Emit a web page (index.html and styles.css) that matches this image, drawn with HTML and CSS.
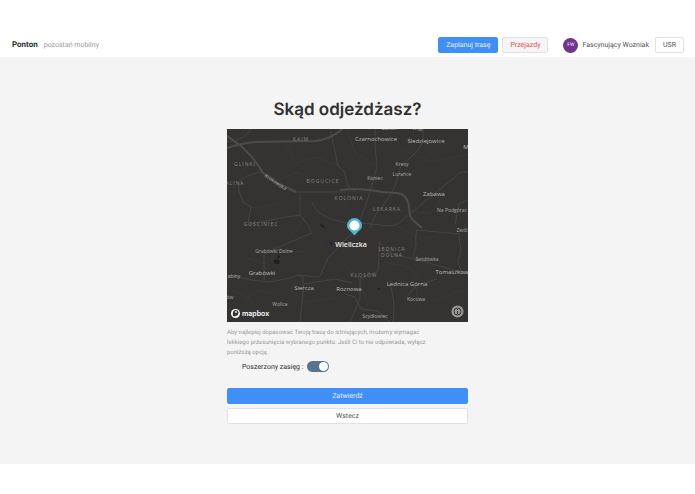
FILE: index.html
```html
<!DOCTYPE html>
<html lang="pl">
<head>
<meta charset="utf-8">
<meta name="viewport" content="width=device-width, initial-scale=1">
<title>Ponton</title>
<link rel="stylesheet" href="styles.css">
</head>
<body>
<header class="topbar">
  <div class="brand"><strong class="brand-name">Ponton</strong><span class="brand-tagline">pozostań mobilny</span></div>
  <nav class="actions">
    <button type="button" class="btn btn-primary">Zaplanuj trasę</button>
    <button type="button" class="btn btn-danger">Przejazdy</button>
    <div class="user"><span class="avatar">FW</span><span>Fascynujący Wozniak</span></div>
    <button type="button" class="btn">USR</button>
  </nav>
</header>
<main class="page">
  <div class="panel">
    <h1 class="title">Skąd odjeżdżasz?</h1>
    <svg class="map" viewBox="227 129 241 193" role="img" aria-label="Mapa: Wieliczka">
      <rect class="land" x="227" y="129" width="241" height="193"/>
      <g class="minor faint">
        <path d="M258 168l19 12 22-8 16 10M285 143l12 20 18-6 25 9M240 200l14 8 24-4M310 200l18 12M375 165l-20-12-8-24M402 150l30 12 36-8M408 210l22 4 12-16M395 225l28 14 20-5M248 258l18 6 12-14 26 2M290 290l16 12 28-4M340 262l18 14 10 30M398 280l18 8 24-6M420 310l-4-22M330 232l-12 14M436 300l32-12M233 290l20 12M372 238l16 12M305 215l-8 16M245 300l14-10 16 5M385 262l25 5 12 20M350 185l-5 20 12 10"/>
      </g>
      <g class="minor">
        <path d="M227 142q18-2 24-13M263 171l-16 5q-10 4-8 15l4 11 8 5-3 16"/>
        <path d="M300 193v22l-14 2-20 4-20 4M300 215l8 10 4 8-24 10-14 6-10 5v27M227 275q14 2 24 5l18 2 22-4 6-3 6 2v16l-3 29M297 275l22 2q4-5 5-10l4-9q10-9 17-18l8-7M303 284l32-5 17 4"/>
        <path d="M330 129l4 18 4 19 6 5 4 15 7 6M312 203l6 9 12 7 17 4M375 129v17l2 20-2 8-5 18-10 29M423 129v13q-5 10-12 15l-10 9-6 20-5 10-14 18-6 14"/>
        <path d="M360 223l30 3q9-1 16-9l55-45h7M416 230l44 4M380 241l-2 30q-10 5-18 7v20l-10 24M378 247l18 8 18 4 54 15M459 236l2 15-3 10 3 11M345 294l10 3 6 12 16 2 13 11M390 283q6 22 3 39M413 257l3-12q-1-10 1-15M468 200l-9 4-4 20M408 295l9-10 20-6"/>
      </g>
      <g class="major">
        <path d="M227 148q15-5 28-6l60-1q17-2 27-12M227 136l14 10q12 10 22 27l12 9 21 10M340 190l15-1 15 1q14 3 27 3 11 1 12 15 0 9 5 13l8 7"/>
      </g>
      <path class="minor" d="M296 192h50"/>
      <g class="water"><path d="M273 261l3-2 4 2-1 3h-4zM277 257l2-2 1 2-2 2zM320 224l3 1 2 3-3-1zM329 244l3-2v2l-2 1z"/><circle cx="379" cy="289" r="1"/></g>
      <defs><path id="road-label" d="M259 173l12 8 10 7 10 5"/></defs>
      <g class="district">
        <text x="301" y="141">KAIM</text><text x="245" y="166">GLINKI</text><text x="235" y="185">ALINA</text>
        <text x="323" y="183">BOGUCICE</text><text x="349" y="200">KOLONIA</text><text x="387" y="211">LEKARKA</text>
        <text x="261" y="226">GOŚCINIEC</text><text x="392" y="251">LEDNICA</text><text x="392" y="257">DOLNA</text><text x="364" y="277">KŁOSÓW</text>
      </g>
      <g class="village">
        <text x="402" y="166">Kresy</text><text x="402" y="176">Lurańce</text><text x="375" y="180">Koniec</text>
        <text x="274" y="253">Grabówki Dolne</text><text x="280" y="306">Wolica</text><text x="427" y="261">Świdówka</text>
        <text x="416" y="301">Kocowa</text><text x="375" y="318">Szydłowiec</text><text x="234" y="278">abiny</text>
        <text x="230" y="299">ów</text><text x="452" y="212">Na Podgórac</text><text x="462" y="232">Zwól</text>
        <text x="389" y="130">Gdzian</text><text x="418" y="130">Węgr</text>
        <text><textPath href="#road-label" startOffset="50%">Krakowska</textPath></text>
      </g>
      <g class="town">
        <text x="376" y="141">Czarnochowice</text><text x="426" y="143">Śledziejowice</text><text x="466" y="149">M</text>
        <text x="434" y="196">Zabawa</text><text x="262" y="275">Grabówki</text><text x="304" y="290">Siercza</text>
        <text x="349" y="291">Roznowa</text><text x="407" y="286">Lednica Górna</text><text x="452" y="274">Tomaszkow</text>
      </g>
      <text class="city" x="351" y="247">Wieliczka</text>
      <path class="pin" d="M354.500 235.500l-4-4.200c-3-2-3.500-4-3.500-5.800a7.500 7.500 0 0 1 15 0c0 1.800-.5 3.800-3.500 5.800z"/>
      <circle class="pin-dot" cx="354.500" cy="225.500" r="5"/>
      <circle class="logo-disc" cx="235.500" cy="313.500" r="4.500"/>
      <path class="logo-mark" d="M233 316q-1-5 2-6 3-.4 3.500 2 .2 3-2.500 4-1.500.4-3 0z"/>
      <path class="logo-star" d="M236 310.500l.5 1 1 .5-1 .5-.5 1-.5-1-1-.5 1-.5z"/>
      <text class="logo-text" x="242" y="316">mapbox</text>
      <circle class="info-disc" cx="457.500" cy="311.500" r="6"/>
      <circle class="info-ring" cx="457.500" cy="311.500" r="3.500"/>
      <path class="info-mark" d="M457 309h1v1h-1zM457 311h1v3h-1z"/>
    </svg>
    <p class="hint">Aby najlepiej dopasować Twoją trasę do istniejących, możemy wymagać lekkiego przesunięcia wybranego punktu. Jeśli Ci to nie odpowiada, wyłącz poniższą opcję.</p>
    <div class="option">
      <label for="range">Poszerzony zasięg&nbsp;:</label>
      <input class="switch" type="checkbox" role="switch" id="range" checked>
    </div>
    <div class="buttons">
      <button type="button" class="btn btn-primary">Zatwierdź</button>
      <button type="button" class="btn">Wstecz</button>
    </div>
  </div>
</main>
</body>
</html>
```
FILE: styles.css
```css
* { box-sizing: border-box; }

body {
  margin: 0;
  padding: 32px 0 30px;
  background: #fff;
  color: #303030;
  font: 7px/10px Roboto, "Liberation Sans", sans-serif;
  text-rendering: geometricPrecision;
}

.topbar {
  display: flex;
  align-items: center;
  justify-content: space-between;
  padding: 5px 11px 4px 12px;
}

.brand { display: flex; align-items: baseline; gap: 6px; }
.brand-name { font-size: 8px; font-weight: 700; }
.brand-tagline { color: #999; }
.actions { display: flex; align-items: center; gap: 4px; color: #555; }

.btn {
  height: 16px;
  padding: 0 7px;
  border: 1px solid #e2e2e2;
  border-radius: 2px;
  background: #fff;
  color: #555;
  font: inherit;
  text-rendering: inherit;
}

.btn-primary { border-color: #408ff7; background: #408ff7; color: #e6f1ff; }
.btn-danger { background: #f5f5f5; color: #ef4b50; }
.user { display: flex; align-items: center; gap: 4px; margin: 0 2px 0 11px; }

.avatar {
  width: 15px;
  height: 15px;
  border-radius: 50%;
  background: #70368f;
  color: #eee;
  font-size: 5px;
  line-height: 15px;
  text-align: center;
}

.page { padding: 40px 16px; background: #f4f4f4; }
.panel { max-width: 241px; margin: 0 auto; }
.title {
  margin: 0 0 5px;
  font-family: Inter, "Liberation Sans", sans-serif;
  font-size: 17px;
  font-weight: 600;
  line-height: 27px;
  text-align: center;
  white-space: nowrap;
}

.map { display: block; width: 100%; font-family: "Open Sans", sans-serif; text-anchor: middle; text-rendering: auto; }
.land { fill: #343332; }
.minor, .major { fill: none; stroke-width: 1; stroke-linejoin: round; }
.minor { stroke: #444443; }
.faint { stroke: #393938; }
.major { stroke: #4c4c4c; stroke-width: 2; }
.water { fill: #1f1f1f; }
.district { fill: #858585; font-size: 5px; letter-spacing: 1px; }
.village { fill: #aaa; font-size: 5px; }
.town { fill: #bbb; font-size: 6px; }
.city { fill: #eee; font-size: 7px; font-weight: 600; }
.pin { fill: #4fb3d3; }
.pin-dot, .logo-disc { fill: #fff; }
.logo-mark { fill: #343332; }
.logo-star { fill: #fff; }
.logo-text { fill: #fff; font: 600 7px Inter, sans-serif; text-anchor: start; }
.info-disc { fill: #999; }
.info-ring { fill: #999; stroke: #343332; }
.info-mark { fill: #343332; }

.hint { max-width: 200px; margin: 6px 0 3px; color: #999; font-size: 6px; }
.option { display: flex; align-items: center; gap: 4px; padding-left: 15px; }

.switch {
  appearance: none;
  display: flex;
  justify-content: flex-end;
  width: 22px;
  height: 11px;
  margin: 0;
  padding: 1px;
  border-radius: 6px;
  background: #58758f;
}

.switch::before { content: ""; width: 9px; height: 9px; border-radius: 50%; background: #fff; }
.switch:not(:checked) { justify-content: flex-start; background: #bbb; }
.buttons { display: grid; gap: 4px; margin-top: 16px; }
```
